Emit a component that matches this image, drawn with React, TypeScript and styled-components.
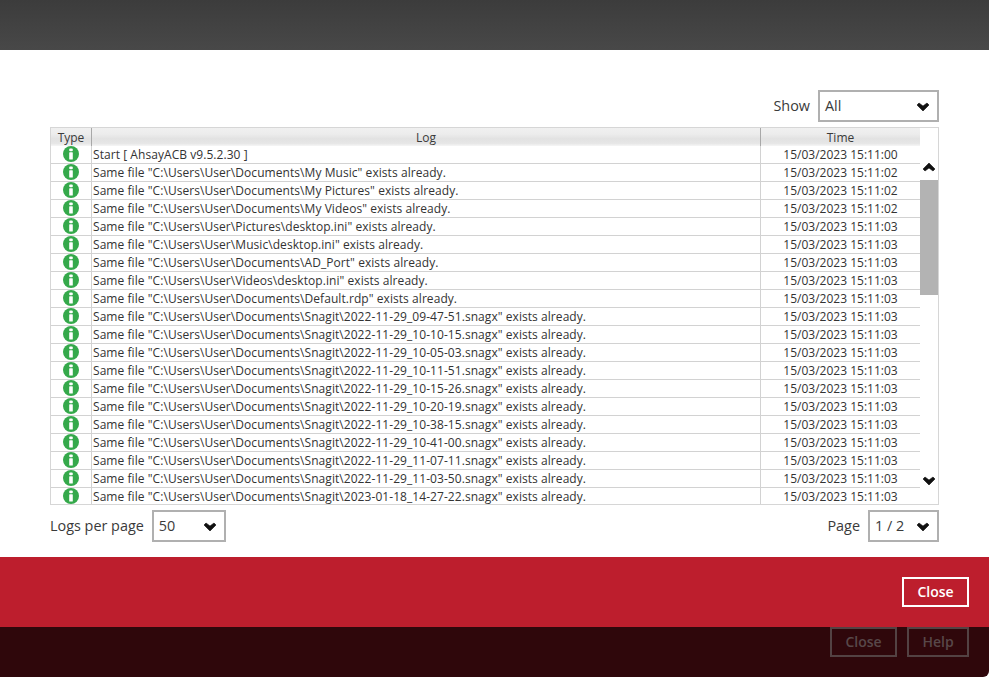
import React from 'react';
import styled, { createGlobalStyle } from 'styled-components';

const GlobalStyle = createGlobalStyle`
  html, body {
    margin: 0;
    padding: 0;
    background: #ffffff;
    overflow: hidden;
  }
  * {
    box-sizing: border-box;
  }
`;

const Page = styled.div`
  width: 989px;
  height: 677px;
  display: flex;
  flex-direction: column;
  font-family: 'Open Sans', 'Liberation Sans', sans-serif;
  color: #333333;
`;

const TopBar = styled.div`
  height: 50px;
  background: linear-gradient(#3c3c3c, #484848);
`;

const Body = styled.div`
  height: 507px;
  padding: 40px 50px 0 50px;
  background: #ffffff;
  display: flex;
  flex-direction: column;
`;

const FilterRow = styled.div`
  display: flex;
  justify-content: flex-end;
  align-items: center;
  gap: 8px;
  height: 32px;
  margin-bottom: 5px;
`;

const Label = styled.span`
  font-size: 14.4px;
  line-height: 31px;
  height: 32px;
  color: #3a3a3a;
`;

const Select = styled.div<{ $width: number }>`
  width: ${(p) => p.$width}px;
  height: 32px;
  border: 2px solid #b0b0b0;
  background: #ffffff;
  display: flex;
  align-items: center;
  justify-content: space-between;
  padding: 0 7px 2px 5px;
  font-size: 14.4px;
  color: #3a3a3a;
  svg {
    margin-top: 4px;
  }
`;

const Grid = styled.div`
  width: 889px;
  height: 378px;
  border: 1px solid #d6d6d6;
  display: flex;
  overflow: hidden;
`;

const TableArea = styled.div`
  width: 869px;
  display: flex;
  flex-direction: column;
`;

const HeaderRow = styled.div`
  display: flex;
  flex: none;
  height: 18px;
  background: linear-gradient(#f0f0f0 0%, #ececec 35%, #e2e2e2 60%, #e6e6e6 85%, #f6f6f6 100%);
`;

const HeaderCell = styled.div<{ $width: number }>`
  width: ${(p) => p.$width}px;
  font-size: 12px;
  line-height: 19px;
  text-align: center;
  color: #3a3a3a;
  border-right: 1px solid #a8a8a8;
  &:last-child {
    border-right: none;
  }
`;

const Row = styled.div`
  display: flex;
  flex: none;
  height: 18px;
  border-bottom: 1px solid #d2d2d2;
  &:last-child {
    border-bottom: none;
  }
`;

const Cell = styled.div<{ $width: number; $center?: boolean }>`
  width: ${(p) => p.$width}px;
  font-size: 12px;
  line-height: 17px;
  padding-left: ${(p) => (p.$center ? 0 : 1)}px;
  letter-spacing: ${(p) => (p.$center ? 0 : 0.06)}px;
  color: #333333;
  white-space: nowrap;
  overflow: hidden;
  border-right: 1px solid #d2d2d2;
  display: ${(p) => (p.$center ? 'flex' : 'block')};
  justify-content: center;
  &:last-child {
    border-right: none;
  }
`;

const ScrollColumn = styled.div`
  width: 18px;
  display: flex;
  flex-direction: column;
  align-items: center;
  padding-top: 33px;
`;

const Thumb = styled.div`
  flex: none;
  width: 18px;
  height: 115px;
  margin-top: 7px;
  margin-bottom: 180px;
  background: #b3b3b3;
`;

const Footer = styled.div`
  display: flex;
  justify-content: space-between;
  align-items: center;
  width: 889px;
  height: 32px;
  margin-top: 5px;
`;

const PagerGroup = styled.div`
  display: flex;
  align-items: center;
  gap: 8px;
`;

const RedBar = styled.div`
  height: 70px;
  background: #bd1e2d;
  display: flex;
  justify-content: flex-end;
  align-items: center;
  padding-right: 20px;
`;

const RedButton = styled.button`
  width: 67px;
  height: 30px;
  border: 2px solid #ffffff;
  background: transparent;
  color: #ffffff;
  font-family: inherit;
  font-size: 14px;
  font-weight: 600;
  padding: 0 0 2px;
`;

const DarkBar = styled.div`
  height: 50px;
  background: #2f070b;
  border-bottom-right-radius: 6px;
  display: flex;
  justify-content: flex-end;
  gap: 10px;
  padding-right: 20px;
`;

const DarkButton = styled.button<{ $width: number }>`
  width: ${(p) => p.$width}px;
  height: 30px;
  border: 2px solid #534243;
  background: transparent;
  color: #584849;
  font-family: inherit;
  font-size: 14px;
  font-weight: 600;
  padding: 0 0 2px;
`;

const Chevron: React.FC<{ up?: boolean }> = ({ up }) => (
  <svg width="14" height="12" viewBox="0 0 14 12" style={{ display: 'block', flexShrink: 0 }}>
    <path
      d={
        up
          ? 'M1 8 L3 10 L7 7 L11 10 L13 8 L7 2 Z'
          : 'M1 4 L3 2 L7 5 L11 2 L13 4 L7 10 Z'
      }
      fill="#111111"
      stroke="#111111"
      strokeWidth="0.6"
      strokeLinejoin="round"
    />
  </svg>
);

const InfoIcon: React.FC = () => (
  <svg width="16" height="16" viewBox="0 0 16 16" style={{ display: 'block' }}>
    <circle cx="8" cy="8" r="8" fill="#35a94b" />
    <rect x="6.2" y="2.4" width="3.6" height="2.8" rx="1" fill="#ffffff" />
    <rect x="6.2" y="6.2" width="3.6" height="7.4" rx="0.6" fill="#ffffff" />
  </svg>
);

const DOCS = 'C:\\Users\\User\\Documents';
const same = (path: string) => `Same file "${path}" exists already.`;

const rows: [string, string][] = [
  ['Start [ AhsayACB v9.5.2.30 ]', '15/03/2023 15:11:00'],
  [same(`${DOCS}\\My Music`), '15/03/2023 15:11:02'],
  [same(`${DOCS}\\My Pictures`), '15/03/2023 15:11:02'],
  [same(`${DOCS}\\My Videos`), '15/03/2023 15:11:02'],
  [same('C:\\Users\\User\\Pictures\\desktop.ini'), '15/03/2023 15:11:03'],
  [same('C:\\Users\\User\\Music\\desktop.ini'), '15/03/2023 15:11:03'],
  [same(`${DOCS}\\AD_Port`), '15/03/2023 15:11:03'],
  [same('C:\\Users\\User\\Videos\\desktop.ini'), '15/03/2023 15:11:03'],
  [same(`${DOCS}\\Default.rdp`), '15/03/2023 15:11:03'],
  ...[
    '2022-11-29_09-47-51',
    '2022-11-29_10-10-15',
    '2022-11-29_10-05-03',
    '2022-11-29_10-11-51',
    '2022-11-29_10-15-26',
    '2022-11-29_10-20-19',
    '2022-11-29_10-38-15',
    '2022-11-29_10-41-00',
    '2022-11-29_11-07-11',
    '2022-11-29_11-03-50',
    '2023-01-18_14-27-22',
  ].map((name): [string, string] => [same(`${DOCS}\\Snagit\\${name}.snagx`), '15/03/2023 15:11:03']),
];

const App: React.FC = () => (
  <>
    <GlobalStyle />
    <Page>
      <TopBar />
      <Body>
        <FilterRow>
          <Label>Show</Label>
          <Select $width={121}>
            All
            <Chevron />
          </Select>
        </FilterRow>
        <Grid>
          <TableArea>
            <HeaderRow>
              <HeaderCell $width={41}>Type</HeaderCell>
              <HeaderCell $width={669}>Log</HeaderCell>
              <HeaderCell $width={159}>Time</HeaderCell>
            </HeaderRow>
            {rows.map(([log, time]) => (
              <Row key={log}>
                <Cell $width={41} $center>
                  <InfoIcon />
                </Cell>
                <Cell $width={669}>{log}</Cell>
                <Cell $width={159} $center>
                  {time}
                </Cell>
              </Row>
            ))}
          </TableArea>
          <ScrollColumn>
            <Chevron up />
            <Thumb />
            <Chevron />
          </ScrollColumn>
        </Grid>
        <Footer>
          <PagerGroup>
            <Label>Logs per page</Label>
            <Select $width={74}>
              50
              <Chevron />
            </Select>
          </PagerGroup>
          <PagerGroup>
            <Label>Page</Label>
            <Select $width={71}>
              1 / 2
              <Chevron />
            </Select>
          </PagerGroup>
        </Footer>
      </Body>
      <RedBar>
        <RedButton>Close</RedButton>
      </RedBar>
      <DarkBar>
        <DarkButton $width={67}>Close</DarkButton>
        <DarkButton $width={62}>Help</DarkButton>
      </DarkBar>
    </Page>
  </>
);

export default App;
